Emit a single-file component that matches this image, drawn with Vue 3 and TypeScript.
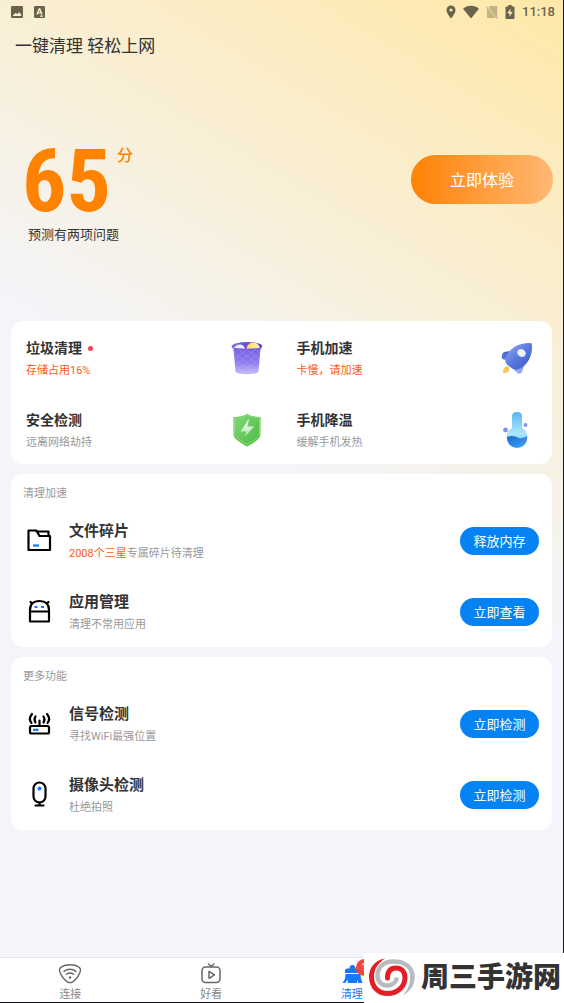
<script setup lang="ts">
interface Feature {
  id: string
  title: string
  note: string
  alert: boolean
  dot: boolean
}

interface Tool {
  id: string
  title: string
  highlight: string
  note: string
  action: string
}

interface Section {
  title: string
  tools: Tool[]
}

const features: Feature[] = [
  { id: 'trash', title: '垃圾清理', note: '存储占用16%', alert: true, dot: true },
  { id: 'rocket', title: '手机加速', note: '卡慢，请加速', alert: true, dot: false },
  { id: 'shield', title: '安全检测', note: '远离网络劫持', alert: false, dot: false },
  { id: 'flask', title: '手机降温', note: '缓解手机发热', alert: false, dot: false },
]

const sections: Section[] = [
  {
    title: '清理加速',
    tools: [
      { id: 'folder', title: '文件碎片', highlight: '2008个三星', note: '专属碎片待清理', action: '释放内存' },
      { id: 'robot', title: '应用管理', highlight: '', note: '清理不常用应用', action: '立即查看' },
    ],
  },
  {
    title: '更多功能',
    tools: [
      { id: 'router', title: '信号检测', highlight: '', note: '寻找WiFi最强位置', action: '立即检测' },
      { id: 'camera', title: '摄像头检测', highlight: '', note: '杜绝拍照', action: '立即检测' },
    ],
  },
]
</script>

<template>
  <div class="page">
    <header class="status">
      <div class="status-group left">
        <svg width="12" height="12" viewBox="0 0 12 12" fill="currentColor">
          <path fill-rule="evenodd" d="M1.2 0h9.6A1.2 1.2 0 0 1 12 1.2v9.6a1.2 1.2 0 0 1-1.2 1.2H1.2A1.2 1.2 0 0 1 0 10.800V1.200A1.200 1.200 0 0 1 1.200 0ZM2 10h8.300V8.600L8 6.200 6.400 8 4.300 7 2 9.200Z" />
        </svg>
        <svg width="11" height="12" viewBox="0 0 11 12">
          <rect width="11" height="12" rx="1.200" fill="currentColor" />
          <path d="M3 8.400 5.200 3h.6L8 8.400M3.800 6.800h3.400M6 10.200h3" fill="none" stroke="#fbefcf" stroke-width="1.300" />
        </svg>
      </div>
      <div class="status-group right">
        <svg width="10" height="14" viewBox="0 0 10 14" fill="currentColor">
          <path fill-rule="evenodd" d="M5 .5a4.500 4.500 0 0 1 4.500 4.500C9.500 8.300 5 13.500 5 13.500S.5 8.300.5 5A4.500 4.500 0 0 1 5 .5Zm0 2.900a1.600 1.600 0 1 0 0 3.200 1.600 1.600 0 0 0 0-3.200Z" />
        </svg>
        <svg width="16" height="14" viewBox="0 0 16 14" fill="currentColor">
          <path d="M8 .8c3.200 0 5.900 1 8 2.900L8 13.400 0 3.700C2.100 1.800 4.800.8 8 .8Z" />
        </svg>
        <svg width="12" height="14" viewBox="1 0 12 14" opacity=".4">
          <path d="M5 1h6.200a1 1 0 0 1 1 1v10.500L3.500 2.400ZM2 4l8.500 9H3a1 1 0 0 1-1-1Z" fill="currentColor" />
          <path d="m1 1.800 11.500 11.800" stroke="currentColor" stroke-width="1.200" />
        </svg>
        <svg width="10" height="14" viewBox="0 0 10 14" fill="currentColor">
          <path fill-rule="evenodd" d="M3.300 0h3.400v1.500h1.800a1 1 0 0 1 1 1V13a1 1 0 0 1-1 1h-7a1 1 0 0 1-1-1V2.500a1 1 0 0 1 1-1h1.800ZM5.500 3.500 2.300 8.300h2.200v3.500L7.700 7H5.500Z" />
        </svg>
        <time class="clock">11:18</time>
      </div>
    </header>

    <h1 class="heading">一键清理 轻松上网</h1>

    <section class="hero">
      <div>
        <p class="score"><span class="number">65</span><span class="unit">分</span></p>
        <p class="forecast">预测有两项问题</p>
      </div>
      <button class="try" type="button">立即体验</button>
    </section>

    <main class="cards">
      <section class="card features">
        <a v-for="item in features" :key="item.id" class="feature" href="#">
          <span class="text">
            <strong class="feature-title">{{ item.title }}<i v-if="item.dot" class="dot"></i></strong>
            <span class="note" :class="{ alert: item.alert }">{{ item.note }}</span>
          </span>
          <svg v-if="item.id === 'trash'" width="36" height="36" viewBox="0 0 36 36">
            <defs>
              <linearGradient id="bin" x1="0" y1="0" x2="0" y2="1">
                <stop offset="0" stop-color="#7562e3" /><stop offset=".55" stop-color="#8e7ced" /><stop offset="1" stop-color="#c8befa" />
              </linearGradient>
              <linearGradient id="rim" x1="0" x2="1">
                <stop offset="0" stop-color="#8d75ed" /><stop offset="1" stop-color="#5127cf" />
              </linearGradient>
              <linearGradient id="ball" x1="0" x2="1">
                <stop offset="0" stop-color="#ffd957" /><stop offset="1" stop-color="#fff2b5" />
              </linearGradient>
            </defs>
            <ellipse cx="18" cy="6" rx="15" ry="4" fill="url(#rim)" />
            <ellipse cx="18" cy="6.500" rx="12.500" ry="3.300" fill="#6b50cf" />
            <path d="M5 9q1-4.500 6-4.500 4 0 5 4.500Z" fill="#edf0ff" />
            <path d="M17.500 9q.5-6 7-6.500 6 .5 6.500 6.500Z" fill="url(#ball)" />
            <path d="M4.500 8.500Q18 10 31.500 8.500L29.500 31q-.4 2-3 2.500Q18 35 9.500 33.500q-2.600-.5-3-2.500Z" fill="url(#bin)" />
            <path d="m5 13 5-4M5.500 19l13-10M6.500 25 27 9M8 30l23-17M11 33l19-14M18 34l11-8M31 13l-5-4M30 19 17 9M29.500 25 9 9M28 30 5 13M25 33 6 19M18 34 7 26" stroke="#c5bbfb" stroke-width=".5" opacity=".55" />
            <path d="M3.300 5.500q-.8 2.700 1.700 3Q18 10 31 8.500q2.500-.3 1.700-3" fill="none" stroke="#7359dd" stroke-width="1" />
          </svg>
          <svg v-else-if="item.id === 'rocket'" width="36" height="36" viewBox="0 0 36 36">
            <defs>
              <linearGradient id="hull" x1="0" y1="0" x2="1" y2="1">
                <stop offset="0" stop-color="#98adf5" /><stop offset=".55" stop-color="#5575dd" /><stop offset="1" stop-color="#3556cc" />
              </linearGradient>
              <linearGradient id="fin" x1="0" y1="0" x2="0" y2="1">
                <stop offset="0" stop-color="#4561cd" /><stop offset="1" stop-color="#9bb0fa" />
              </linearGradient>
            </defs>
            <path d="M11 11 5 12Q2 14 3 19l4 1ZM26 22l-3 10q-1.500 2.500-4 1.500L13 28Z" fill="url(#fin)" />
            <path d="M31 3q2 0 2 2 .5 10-4.500 17-5 7-11.500 7.500-3 0-8-4-4-3.500-2.500-7Q9 11 16 6.500 22 3 31 3Z" fill="url(#hull)" />
            <ellipse cx="22.500" cy="13" rx="4.500" ry="3.800" fill="#e9efff" transform="rotate(35 22.500 13)" />
            <path d="M10 27q1 4-2 5.500Q5 34 4 32.500q0-4 2-5.500 2-1.500 4 0Z" fill="#fbc456" />
          </svg>
          <svg v-else-if="item.id === 'shield'" width="36" height="36" viewBox="0 0 36 36">
            <defs>
              <linearGradient id="guard" x1="0" y1="0" x2="1" y2="1">
                <stop offset="0" stop-color="#85d67a" /><stop offset="1" stop-color="#48bd43" />
              </linearGradient>
              <linearGradient id="bolt" x1="0" y1="0" x2="0" y2="1">
                <stop offset="0" stop-color="#fff" /><stop offset="1" stop-color="#a9e6a2" />
              </linearGradient>
            </defs>
            <path d="M18 2q5 3.200 13.500 3V23q-1 5-13.500 11.500Q5.500 28 4.500 23V5Q13 5.200 18 2Z" fill="#52c236" />
            <path d="M18 3q5 3 12.500 2.800V22q-1 4.500-12.500 10.500Q6.500 26.500 5.500 22V5.800Q13 6 18 3Z" fill="url(#guard)" stroke="#9bdd8d" stroke-width=".8" />
            <path d="M20 6.500 11.500 19.500h6L15.500 25l9.500-10.500H18.500Z" fill="url(#bolt)" />
          </svg>
          <svg v-else width="36" height="36" viewBox="0 0 36 36">
            <defs>
              <linearGradient id="glass" x1="0" y1="0" x2="0" y2="1">
                <stop offset="0" stop-color="#56b6f3" /><stop offset=".6" stop-color="#aee7fb" /><stop offset="1" stop-color="#5bbdf3" />
              </linearGradient>
              <linearGradient id="liquid" x1="0" y1="0" x2="1" y2="1">
                <stop offset="0" stop-color="#1d69d0" /><stop offset="1" stop-color="#38a7f5" />
              </linearGradient>
            </defs>
            <path d="M13 4q0-4 5-4t5 4v12q5.500 3 5.500 9.500A10.500 10.500 0 0 1 18 36 10.500 10.500 0 0 1 7.500 25.500Q7.500 19 13 16Z" fill="url(#glass)" />
            <path d="M8 25q5-2 10 .3 5 2.200 10-1.300A10 10 0 0 1 18 35.500 10 10 0 0 1 8 25Z" fill="url(#liquid)" />
            <circle cx="6.500" cy="18" r="2.400" fill="#7c91f4" />
            <circle cx="26.500" cy="13" r="1.900" fill="#7c91f4" />
            <circle cx="25.500" cy="28" r="2" fill="#6377e3" />
          </svg>
        </a>
      </section>

      <section v-for="section in sections" :key="section.title" class="card">
        <h2 class="section-title">{{ section.title }}</h2>
        <ul class="tools">
          <li v-for="tool in section.tools" :key="tool.id" class="tool">
            <svg v-if="tool.id === 'folder'" class="line" width="28" height="28" viewBox="0 0 28 28">
              <path d="M3.500 3.500h8l3 5.500H25V23H3.500ZM11.500 4.500H23.500V9" />
              <path class="blue" d="M8 18.500h6" />
            </svg>
            <svg v-else-if="tool.id === 'robot'" class="line" width="28" height="28" viewBox="0 0 28 28">
              <path d="M5 23.500V12q0-9 9.500-9T24 12v11.500ZM5 13.500h19M7 5.500 5.500 4M22 5.500 23.500 4" />
              <path class="blue" d="M9.500 9h3M16 9h3" />
            </svg>
            <svg v-else-if="tool.id === 'router'" class="line" width="28" height="28" viewBox="0 0 28 28">
              <rect x="5" y="16" width="19" height="7.500" rx="1.500" />
              <path d="M14.500 10.500v5M10.500 6.500q-2 3 0 6M18.500 6.500q2 3 0 6M7 4q-4 5 -.5 9M22 4q4 5 .5 9" />
              <path class="blue" d="M8 19.800h5.500" />
            </svg>
            <svg v-else class="line" width="28" height="28" viewBox="0 0 28 28">
              <rect x="8.500" y="1.500" width="12" height="20" rx="6" />
              <path d="M14.500 21.500v2.500M10.500 24.500h8" />
              <circle cx="14.500" cy="7.500" r="1.900" fill="#1677ff" stroke="none" />
            </svg>
            <span class="text">
              <strong class="tool-title">{{ tool.title }}</strong>
              <span class="note"><em v-if="tool.highlight">{{ tool.highlight }}</em>{{ tool.note }}</span>
            </span>
            <button class="action" type="button">{{ tool.action }}</button>
          </li>
        </ul>
      </section>
    </main>

    <nav class="tabs">
      <button class="tab" type="button">
        <svg width="24" height="22" viewBox="0 0 24 22" fill="none" stroke="#666" stroke-width="1.400" stroke-linecap="round">
          <path d="M12 2.700c4.300 0 7.500 1.200 9.400 2.900 1.300 1.200 1.300 3.100.5 5-1.600 4-4.200 7.300-7.100 9.200q-2.800 1.700-5.600 0C6.300 17.900 3.700 14.600 2.100 10.600c-.8-1.900-.8-3.800.5-5C4.500 3.900 7.700 2.700 12 2.700Z" />
          <path d="M6 9.300q6-4 12 0M8.400 12.300q3.600-2.500 7.200 0" />
          <circle cx="12" cy="15.500" r="1.200" fill="#666" stroke="none" />
        </svg>
        <span>连接</span>
      </button>
      <button class="tab" type="button">
        <svg width="24" height="22" viewBox="0 0 24 22" fill="none" stroke="#666" stroke-width="1.500" stroke-linecap="round" stroke-linejoin="round">
          <rect x="3" y="5" width="18" height="15.500" rx="3.500" />
          <path d="m9.500 2 2.700 2.500L15 2M10 9.300v7l5.500-3.500Z" />
        </svg>
        <span>好看</span>
      </button>
      <button class="tab active" type="button">
        <svg width="24" height="22" viewBox="0 0 24 22" fill="#1677ff">
          <path d="M9.500 6.500Q9.500 3 12.500 3t3 3.500H19q2 0 2 2V11H5V8.500q0-2 2-2ZM5.500 12h15q-.2 3.500 2 9h-4L17 18v3H7.500l.5-3.500L5 21H2.500q3-3.500 3-9Z" />
        </svg>
        <span>清理</span>
        <b class="badge">1</b>
      </button>
    </nav>

    <aside class="brand">
      <svg width="48" height="40" viewBox="0 0 48 40" fill="none">
        <path d="M28 19.500C27 24.500 23 27.500 18 27.500 12 27.500 8.500 23 8.500 17.500 8.500 9 15 3.500 24 3.500c12 0 19.500 5.500 19.500 15" stroke="#b9bcbf" stroke-width="4.500" />
        <path d="M41.200 18h4.600c0 9-4 15-12 19.500 5-5.500 7.400-11.500 7.400-19.500Z" fill="#b9bcbf" />
        <path d="M16 .5C7 1.500 0 9 0 19h5C5 11 9 5 16 .5Z" fill="#e31e27" />
        <path d="M2.500 18.500C2.500 28.500 9 35.500 18.500 35.500 28.500 35.500 36 28.500 36 19.500c0-6-4-9.500-9-9.500-6 0-8.500 4-8.500 10" stroke="#e31e27" stroke-width="5" stroke-linecap="round" />
      </svg>
      <span>周三手游网</span>
    </aside>
  </div>
</template>

<style>
body {
  margin: 0;
}
</style>

<style scoped>
.page {
  position: relative;
  box-sizing: border-box;
  display: flex;
  flex-direction: column;
  min-height: 100vh;
  border-right: 1px solid #15171b;
  border-bottom: 1px solid #15171b;
  background: linear-gradient(31deg, #f4f5fb 52%, #ffe8a8 100%);
  color: #333;
  font-family: Roboto, "Noto Sans CJK SC", sans-serif;
}

.page * {
  box-sizing: border-box;
}

button {
  border: 0;
  padding: 0;
  font-family: inherit;
  cursor: pointer;
}

svg {
  flex: none;
  display: block;
}

.status {
  display: flex;
  justify-content: space-between;
  align-items: center;
  height: 24px;
  padding: 0 8px 0 11px;
  color: #69634d;
}

.status-group {
  display: flex;
  align-items: center;
}

.left {
  gap: 11px;
}

.right {
  gap: 7px;
}

.clock {
  font-size: 13px;
  font-weight: 500;
  line-height: 24px;
}

.heading {
  margin: 10px 15px 0;
  font-size: 17px;
  font-weight: 400;
  line-height: 24px;
}

.hero {
  display: flex;
  justify-content: space-between;
  align-items: flex-start;
  padding: 87px 10px 76px 22px;
}

.score {
  display: flex;
  align-items: flex-start;
  gap: 6px;
  margin: 0;
  color: #ff8200;
}

.number {
  font-family: "Roboto Condensed", Roboto, sans-serif;
  font-size: 88px;
  font-weight: 700;
  line-height: 72px;
}

.unit {
  font-size: 16px;
  font-weight: 500;
  line-height: 22px;
}

.forecast {
  margin: 8px 6px 0;
  font-size: 13px;
  line-height: 20px;
}

.try {
  width: 142px;
  height: 49px;
  margin-top: 10px;
  padding-bottom: 2px;
  border-radius: 25px;
  background: linear-gradient(90deg, #ff8205, #ffb873);
  color: #fff;
  font-size: 16px;
}

.cards {
  display: flex;
  flex-direction: column;
  gap: 10px;
  padding: 0 11px;
}

.card {
  border-radius: 12px;
  background: #fff;
}

.features {
  display: grid;
  grid-template-columns: 1fr 1fr;
  row-gap: 1px;
}

.feature {
  display: flex;
  justify-content: space-between;
  align-items: center;
  padding: 16px 17px 13px 15px;
  color: inherit;
  text-decoration: none;
}

.text {
  display: flex;
  flex-direction: column;
  gap: 4px;
}

.feature-title {
  display: flex;
  align-items: center;
  gap: 6px;
  font-size: 14px;
  font-weight: 700;
  line-height: 22px;
}

.dot {
  width: 5px;
  height: 5px;
  border-radius: 50%;
  background: #fb4343;
}

.note {
  color: #999;
  font-size: 11px;
  line-height: 16px;
}

.note em,
.alert {
  color: #ff5a14;
  font-style: normal;
}

.section-title {
  margin: 0;
  padding: 11px 12px 0;
  color: #999;
  font-size: 11px;
  font-weight: 400;
  line-height: 18px;
}

.tools {
  display: flex;
  flex-direction: column;
  gap: 29px;
  margin: 0;
  padding: 17px 13px 14px 14px;
  list-style: none;
}

.tool {
  display: flex;
  align-items: center;
  gap: 16px;
}

.tool-title {
  font-size: 15px;
  font-weight: 700;
  line-height: 22px;
}

.line {
  fill: none;
  stroke: #000;
  stroke-width: 2.2;
  stroke-linecap: round;
  stroke-linejoin: round;
}

.line .blue {
  stroke: #1677ff;
  stroke-linecap: butt;
}

.action {
  width: 79px;
  height: 28px;
  margin-left: auto;
  padding-bottom: 2px;
  border-radius: 14px;
  background: #0583f2;
  color: #fff;
  font-size: 13px;
}

.tabs {
  display: grid;
  grid-template-columns: repeat(4, 1fr);
  margin-top: auto;
  border-top: 1px solid #e3e4eb;
  background: #fff;
}

.tab {
  position: relative;
  display: flex;
  flex-direction: column;
  align-items: center;
  gap: 4px;
  padding: 4px 0 0;
  background: none;
  color: #888;
  font-size: 11px;
  line-height: 14px;
}

.active {
  color: #1677ff;
}

.badge {
  position: absolute;
  top: 1px;
  left: 50%;
  width: 17px;
  height: 17px;
  margin-left: 4px;
  border-radius: 50%;
  background: #f5443c;
  color: #fff;
  font-size: 11px;
  font-weight: 400;
  line-height: 17px;
}

.brand {
  position: absolute;
  right: -1px;
  bottom: -1px;
  display: flex;
  align-items: center;
  gap: 4px;
  width: 200px;
  height: 50px;
  padding-left: 5px;
  background: #fff;
  color: #333;
  font-size: 28px;
  font-weight: 900;
  line-height: 50px;
  white-space: nowrap;
}
</style>
